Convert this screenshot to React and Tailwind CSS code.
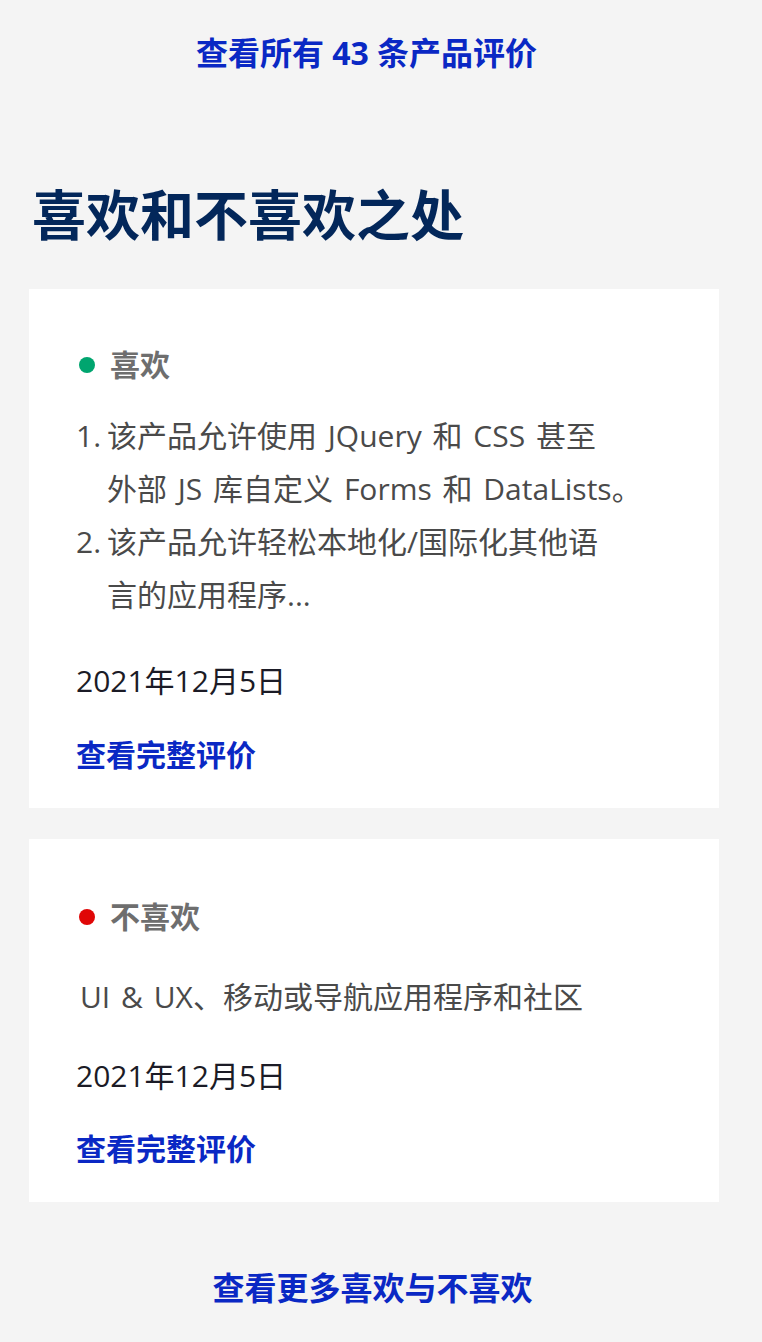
import React from "react";

const FONT = { fontFamily: '"Open Sans", "Noto Sans CJK SC", sans-serif' };
const HEAD = { fontFamily: '"Noto Sans CJK SC", sans-serif' };

function Dot({ color }) {
  return <span className={`inline-block w-[16px] h-[16px] rounded-full ${color}`} />;
}

function Card({ children, className = "" }) {
  return (
    <div className={`bg-white ml-[29px] w-[690px] pl-[47px] pr-[20px] ${className}`}>{children}</div>
  );
}

export default function App() {
  return (
    <div className="min-h-[1342px] w-full bg-[#f4f4f4] overflow-hidden" style={FONT}>
      <div className="w-[733px] pt-[33px] text-center text-[32px] leading-[40px] font-bold text-[#0a28c4]">
        查看所有 43 条产品评价
      </div>

      <h2
        className="mt-[108px] pl-[32px] text-[54px] leading-[64px] font-bold text-[#03275a]"
        style={HEAD}
      >
        喜欢和不喜欢之处
      </h2>

      <Card className="mt-[44px] pt-[56px] pb-[33px]">
        <div className="flex items-center h-[40px] ml-[3px]">
          <Dot color="bg-[#00a56f]" />
          <span className="ml-[15px] text-[30px] leading-[40px] font-bold text-[#6e6e6e]">喜欢</span>
        </div>
        <ol className="mt-[24px] text-[30px] leading-[53px] text-[#4a4a4a] whitespace-nowrap [word-spacing:3px]">
          <li className="flex">
            <span className="w-[31px] shrink-0">1.</span>
            <div>
              <div>该产品允许使用 JQuery 和 CSS 甚至</div>
              <div>外部 JS 库自定义 Forms 和 DataLists。</div>
            </div>
          </li>
          <li className="flex">
            <span className="w-[31px] shrink-0">2.</span>
            <div>
              <div>该产品允许轻松本地化/国际化其他语</div>
              <div>言的应用程序...</div>
            </div>
          </li>
        </ol>
        <div className="mt-[40px] text-[30px] leading-[40px] text-[#1b1b26]">2021年12月5日</div>
        <div className="mt-[34px] text-[30px] leading-[40px] font-bold text-[#0a28c4]">查看完整评价</div>
      </Card>

      <Card className="mt-[31px] pt-[58px] pb-[33px]">
        <div className="flex items-center h-[40px] ml-[3px]">
          <Dot color="bg-[#e00707]" />
          <span className="ml-[15px] text-[30px] leading-[40px] font-bold text-[#6e6e6e]">不喜欢</span>
        </div>
        <div className="mt-[40px] pl-[4px] text-[30px] leading-[40px] text-[#4a4a4a] whitespace-nowrap [word-spacing:3px]">
          UI &amp; UX、移动或导航应用程序和社区
        </div>
        <div className="mt-[39px] text-[30px] leading-[40px] text-[#1b1b26]">2021年12月5日</div>
        <div className="mt-[33px] text-[30px] leading-[40px] font-bold text-[#0a28c4]">查看完整评价</div>
      </Card>

      <div className="w-[745px] mt-[66px] text-center text-[32px] leading-[40px] font-bold text-[#0a28c4]">
        查看更多喜欢与不喜欢
      </div>
    </div>
  );
}
